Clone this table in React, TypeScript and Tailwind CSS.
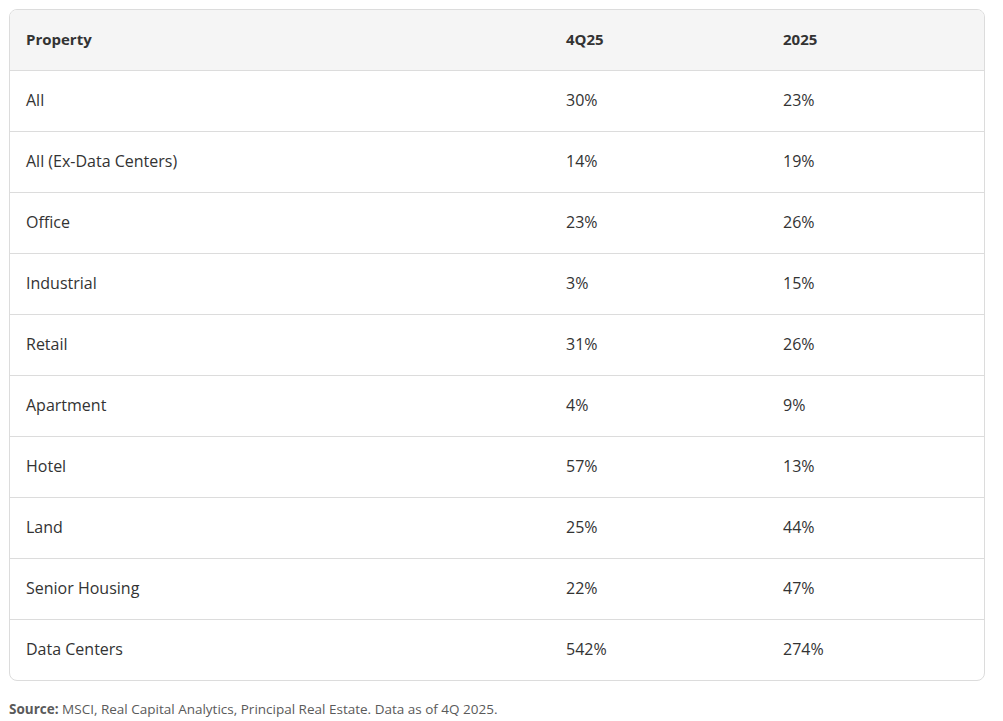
import React from "react";

const rows: [string, string, string][] = [
  ["All", "30%", "23%"],
  ["All (Ex-Data Centers)", "14%", "19%"],
  ["Office", "23%", "26%"],
  ["Industrial", "3%", "15%"],
  ["Retail", "31%", "26%"],
  ["Apartment", "4%", "9%"],
  ["Hotel", "57%", "13%"],
  ["Land", "25%", "44%"],
  ["Senior Housing", "22%", "47%"],
  ["Data Centers", "542%", "274%"],
];

export default function App() {
  return (
    <div className="min-h-screen bg-white pl-[9px] pr-[18px] pt-[9px] text-[#333333] [font-family:'Open_Sans',sans-serif]">
      <div className="overflow-hidden rounded-[8px] border border-[#dcdcdc]">
        <div className="grid h-[61px] grid-cols-[540px_217px_1fr] items-center border-b border-[#dcdcdc] bg-[#f5f5f5] pb-[2px] text-[15px] font-bold">
          <div className="pl-4">Property</div>
          <div className="pl-4">4Q25</div>
          <div className="pl-4">2025</div>
        </div>
        {rows.map((r, i) => (
          <div
            key={r[0]}
            className={`grid grid-cols-[540px_217px_1fr] items-center pb-[2px] text-[16px] ${i < rows.length - 1 ? "h-[61px] border-b border-[#dcdcdc]" : "h-[60px]"}`}
          >
            <div className="pl-4">{r[0]}</div>
            <div className="pl-4">{r[1]}</div>
            <div className="pl-4">{r[2]}</div>
          </div>
        ))}
      </div>
      <p className="mt-[18px] text-[13.5px] text-[#5a5a5a]">
        <span className="font-bold">Source:</span> MSCI, Real Capital Analytics, Principal Real Estate. Data as of 4Q 2025.
      </p>
    </div>
  );
}
